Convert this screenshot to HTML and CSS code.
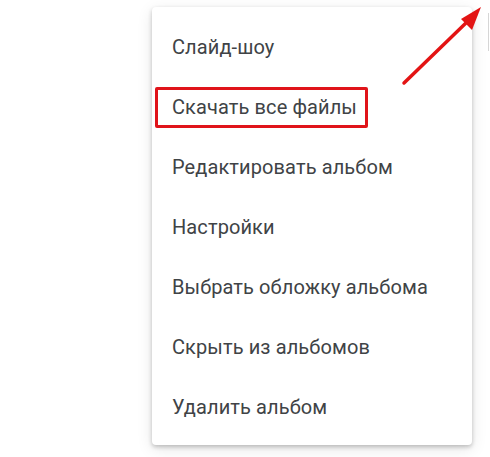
FILE: index.html
```html
<!DOCTYPE html>
<html lang="ru">
<head>
<meta charset="utf-8">
<link rel="stylesheet" href="styles.css">
</head>
<body>
<div class="stage">
  <div class="edge"></div>
  <ul class="menu">
    <li class="item">Слайд-шоу</li>
    <li class="item highlighted"><span class="mark">Скачать все файлы</span></li>
    <li class="item">Редактировать альбом</li>
    <li class="item">Настройки</li>
    <li class="item">Выбрать обложку альбома</li>
    <li class="item">Скрыть из альбомов</li>
    <li class="item">Удалить альбом</li>
  </ul>
  <svg class="arrow" width="490" height="120" viewBox="0 0 490 120">
    <line x1="404" y1="83" x2="468" y2="21" stroke="#e31414" stroke-width="3.5" stroke-linecap="round"/>
    <polygon points="481,7 461,19 472,30" fill="#e31414"/>
  </svg>
</div>
</body>
</html>
```
FILE: styles.css
```css
* { box-sizing: border-box; }
html, body { margin: 0; padding: 0; background: #fff; }
body { width: 490px; height: 457px; overflow: hidden; font-family: Roboto, "Noto Sans", sans-serif; }
.stage { position: relative; width: 490px; height: 457px; padding: 7px 0 0 152px; }
.edge { position: absolute; left: 488px; top: 13px; width: 1px; height: 38px; background: #d6d6d6; }
.menu {
  list-style: none;
  margin: 0;
  padding: 10px 0 8px;
  width: 320px;
  background: #fff;
  border-radius: 4px;
  box-shadow: 0 2px 4px rgba(0,0,0,0.22), 0 4px 16px rgba(0,0,0,0.10);
}
.item {
  height: 60px;
  display: flex;
  align-items: center;
  padding-left: 20px;
  font-size: 20px;
  color: #404346;
  letter-spacing: 0.1px;
}
.highlighted { padding-left: 3px; }
.mark {
  display: flex;
  align-items: center;
  height: 41px;
  width: 213px;
  padding: 0 0 0 14px;
  border: 3px solid #e0141a;
  border-radius: 2px;
}
.arrow { position: absolute; left: 0; top: 0; }
```
